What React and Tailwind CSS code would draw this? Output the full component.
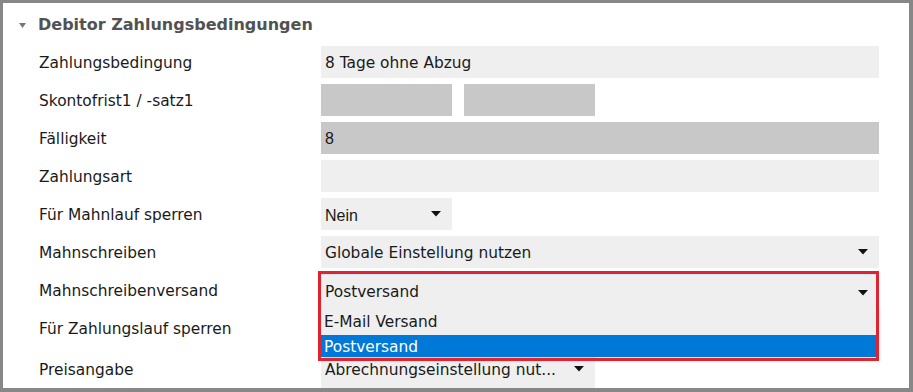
import React from "react";

function Arrow() {
    return (
        <svg width="10" height="6" viewBox="0 0 10 6" className="shrink-0">
            <polygon points="0,0 10,0 5,5.5" fill="#111" />
        </svg>
    );
}

function Row({ label, children, tall }) {
    return (
        <div className={`flex items-center ${tall ? "h-[38px]" : "h-8"}`}>
            <div className="w-[282px] shrink-0 pt-[3px]">{label}</div>
            {children}
        </div>
    );
}

function Select({ value, width, arial, tall }) {
    return (
        <div
            className={`${width} ${
                tall ? "h-[38px]" : "h-8"
            } flex items-center justify-between bg-[#efefef] pl-1 pr-[11px]`}
        >
            <span
                className={`pt-[3px] ${
                    arial
                        ? "font-['Liberation_Sans',sans-serif] text-[16px]"
                        : ""
                }`}
            >
                {value}
            </span>
            <Arrow />
        </div>
    );
}

export default function App() {
    return (
        <div className="w-[913px] h-[392px] overflow-hidden bg-white border-t-[3px] border-l-[3px] border-r-4 border-b-4 border-[#878787] font-['DejaVu_Sans',sans-serif] text-[15.4px] text-[#1a1a1a]">
            {/* section header */}
            <div className="flex items-center h-[43px] pl-4 gap-3 pt-[1px]">
                <svg width="7" height="5" viewBox="0 0 7 5">
                    <polygon points="0,0 7,0 3.5,5" fill="#777" />
                </svg>
                <h1 className="text-[16px] font-bold text-[#525252]">
                    Debitor Zahlungsbedingungen
                </h1>
            </div>

            <div className="flex flex-col gap-[6px] pl-9">
                <Row label="Zahlungsbedingung">
                    <div className="w-[558px] h-8 flex items-center bg-[#efefef] pl-1 pt-[3px]">
                        8 Tage ohne Abzug
                    </div>
                </Row>
                <Row label="Skontofrist1 / -satz1">
                    <div className="flex gap-3">
                        <div className="w-[131px] h-8 bg-[#c8c8c8]" />
                        <div className="w-[131px] h-8 bg-[#c8c8c8]" />
                    </div>
                </Row>
                <Row label="Fälligkeit">
                    <div className="w-[558px] h-8 flex items-center bg-[#c8c8c8] pl-1 pt-[2px] font-['Liberation_Sans',sans-serif] text-[16px]">
                        8
                    </div>
                </Row>
                <Row label="Zahlungsart">
                    <div className="w-[558px] h-8 bg-[#efefef]" />
                </Row>
                <Row label="Für Mahnlauf sperren">
                    <Select value="Nein" width="w-[131px]" arial />
                </Row>
                <Row label="Mahnschreiben">
                    <Select
                        value="Globale Einstellung nutzen"
                        width="w-[558px]"
                    />
                </Row>
                <Row label="Mahnschreibenversand">
                    <div className="relative z-10 w-[558px]">
                        <div className="h-8 flex items-center justify-between bg-[#efefef] border-t border-[#cde4f7] pl-1 pr-[11px] pt-[4px]">
                            <span>Postversand</span>
                            <Arrow />
                        </div>
                        <div className="absolute top-8 left-0 right-[3px] bg-[#efefef] shadow-[3px_3px_4px_rgba(0,0,0,0.12)]">
                            <div className="h-[29px] flex items-center pl-[3px] pt-[5px]">
                                E-Mail Versand
                            </div>
                            <div className="h-[22px] flex items-center pl-[3px] pt-[3px] bg-[#0078d7] text-white">
                                Postversand
                            </div>
                        </div>
                        <div className="absolute -top-[3px] -left-[3px] right-0 h-[90px] border-[3px] border-[#e1222f] pointer-events-none" />
                    </div>
                </Row>
                <Row label="Für Zahlungslauf sperren">
                    <div />
                </Row>
                <Row label="Preisangabe" tall>
                    <Select
                        value="Abrechnungseinstellung nut..."
                        width="w-[274px]"
                        tall
                    />
                </Row>
            </div>
        </div>
    );
}
